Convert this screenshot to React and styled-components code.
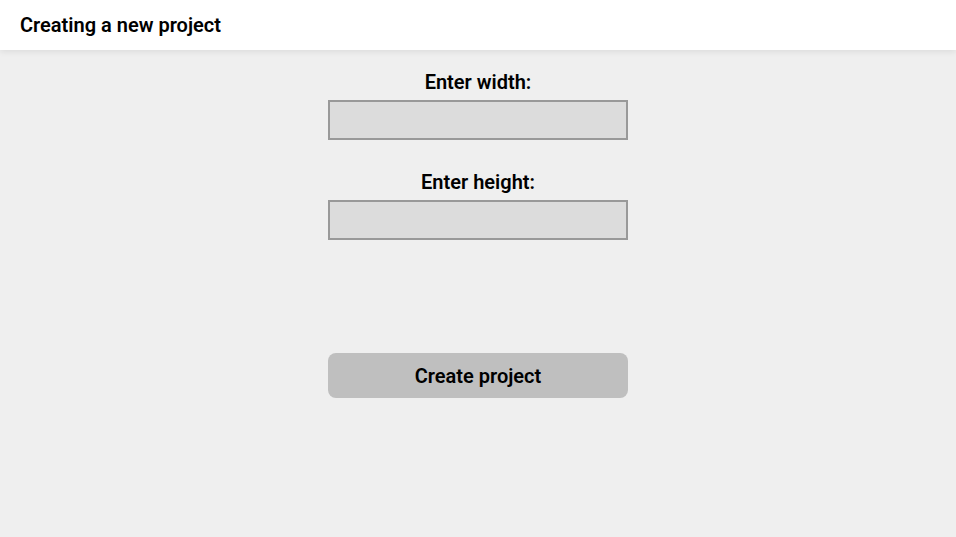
import React from 'react'
import styled, { createGlobalStyle } from 'styled-components'

const GlobalStyle = createGlobalStyle`
  html, body {
    margin: 0;
    padding: 0;
    height: 100%;
    background-color: #efefef;
    font-family: Roboto, "Liberation Sans", sans-serif;
  }
  #root {
    min-height: 100%;
  }
`

const Header = styled.header`
  height: 50px;
  background-color: white;
  display: flex;
  align-items: center;
  padding: 0 20px;
  box-shadow: 0 2px 6px rgba(0, 0, 0, 0.08);
  position: relative;
  z-index: 1;

  h1 {
    margin: 0;
    font-size: 20px;
    font-weight: 600;
    color: #000;
  }
`

const Form = styled.main`
  display: flex;
  flex-direction: column;
  align-items: center;
  padding-top: 21px;
`

const Field = styled.div`
  display: flex;
  flex-direction: column;
  align-items: center;
  margin-bottom: 31px;
`

const Label = styled.label`
  font-size: 20px;
  font-weight: 600;
  line-height: 23px;
  margin-bottom: 6px;
  color: #000;
`

const Input = styled.input`
  box-sizing: border-box;
  width: 300px;
  height: 40px;
  background-color: #dcdcdc;
  border: 2px solid #999999;
  outline: none;
  font-size: 16px;
  padding: 0 8px;
`

const CreateButton = styled.button`
  width: 300px;
  height: 45px;
  margin-top: 82px;
  border: 0;
  border-radius: 8px;
  background-color: #bfbfbf;
  font-family: Roboto, "Liberation Sans", sans-serif;
  font-size: 20px;
  font-weight: 600;
  color: #000;
  &:hover {
    cursor: pointer;
  }
`

function App() {
  return (
    <>
      <GlobalStyle />
      <Header>
        <h1>Creating a new project</h1>
      </Header>
      <Form>
        <Field>
          <Label htmlFor="width">Enter width:</Label>
          <Input id="width" type="text" />
        </Field>
        <Field>
          <Label htmlFor="height">Enter height:</Label>
          <Input id="height" type="text" />
        </Field>
        <CreateButton>Create project</CreateButton>
      </Form>
    </>
  )
}

export default App
